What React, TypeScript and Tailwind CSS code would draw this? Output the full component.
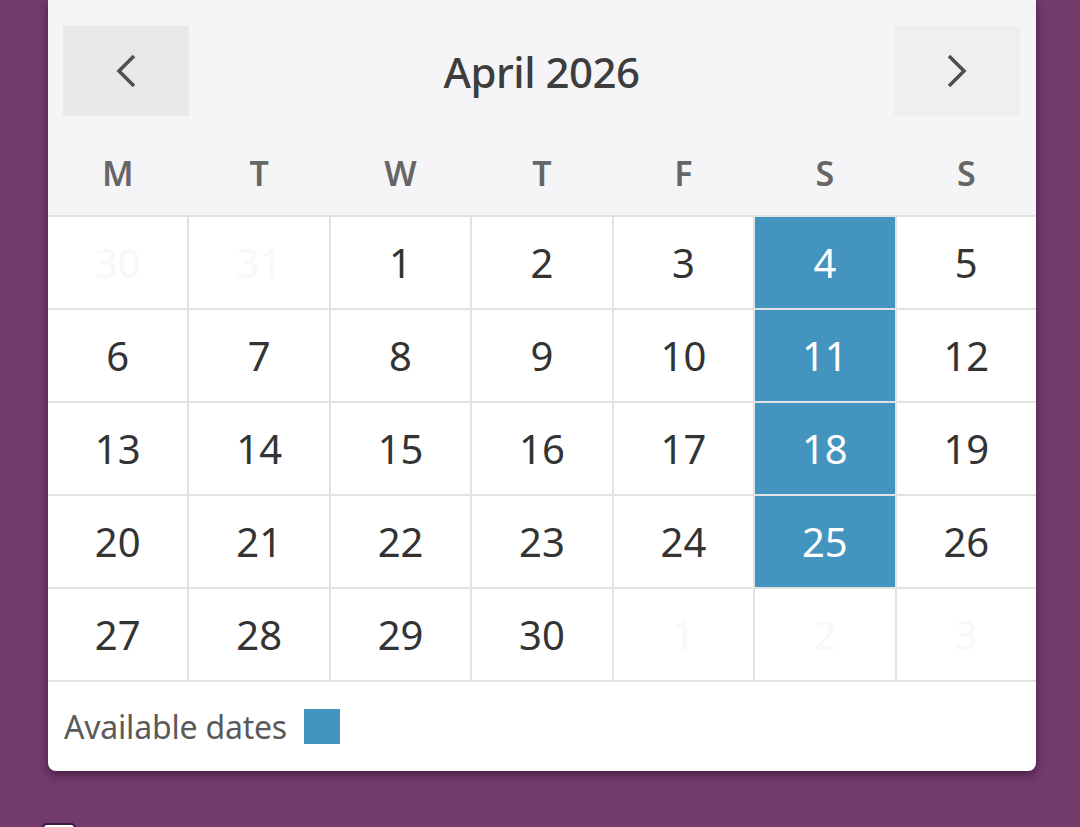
import React from "react";

type Cell = { day: number; muted?: boolean; available?: boolean };

const weekdays = ["M", "T", "W", "T", "F", "S", "S"];

// April 2026 starts on a Wednesday
const buildCells = (): Cell[] => {
  const cells: Cell[] = [{ day: 30, muted: true }, { day: 31, muted: true }];
  for (let d = 1; d <= 30; d++) {
    cells.push({ day: d, available: [4, 11, 18, 25].includes(d) });
  }
  for (let d = 1; d <= 3; d++) cells.push({ day: d, muted: true });
  return cells;
};

const Chevron = ({ dir }: { dir: "left" | "right" }) => (
  <svg width="22" height="34" viewBox="0 0 22 34" fill="none">
    <path
      d={dir === "left" ? "M19 2 L4 17 L19 32" : "M3 2 L18 17 L3 32"}
      stroke="#505050"
      strokeWidth="3.6"
      strokeLinecap="butt"
    />
  </svg>
);

export default function App() {
  const cells = buildCells();

  return (
    <div
      className="h-[827px] w-[1080px] overflow-hidden bg-[#713b6c]"
      style={{ fontFamily: "'Noto Sans', 'Open Sans', sans-serif" }}
    >
      <div className="mx-[48px] w-[988px] overflow-hidden rounded-b-[8px] bg-white shadow-[0_4px_8px_rgba(40,10,40,0.55)]">
        {/* Header */}
        <div className="bg-[#f5f5f7] pt-[26px] pb-[15px]">
          <div className="flex items-center justify-between pl-[15px] pr-[16px]">
            <button className="flex h-[90px] w-[126px] items-center justify-center bg-[#e8e8e8]">
              <Chevron dir="left" />
            </button>
            <div className="text-[42px] font-medium tracking-[-0.5px] text-[#3d3d3d]">
              April 2026
            </div>
            <button className="flex h-[90px] w-[126px] items-center justify-center bg-[#efefef]">
              <Chevron dir="right" />
            </button>
          </div>
          <div className="mt-[30px] grid h-[54px] grid-cols-7 gap-[2px]">
            {weekdays.map((w, i) => (
              <div
                key={i}
                className="flex items-center justify-center text-[34px] font-semibold text-[#666]"
              >
                {w}
              </div>
            ))}
          </div>
        </div>

        {/* Days */}
        <div className="grid grid-cols-7 gap-[2px] border-y-2 border-[#e2e2e2] bg-[#e2e2e2]">
          {cells.map((c, i) => (
            <div
              key={i}
              className={
                c.available
                  ? "flex h-[91px] items-center justify-center bg-[#4394be] text-[40px] text-white"
                  : c.muted
                  ? "flex h-[91px] items-center justify-center bg-white text-[40px] text-[#f8f8f8]"
                  : "flex h-[91px] items-center justify-center bg-white text-[40px] text-[#333]"
              }
            >
              {c.day}
            </div>
          ))}
        </div>

        {/* Legend */}
        <div className="flex h-[89px] items-center gap-[17px] pl-[16px]">
          <span className="text-[32px] tracking-[-0.2px] text-[#5a5a5a]">Available dates</span>
          <span className="h-[35px] w-[36px] bg-[#4394be]" />
        </div>
      </div>

      {/* Checkbox row, below the fold */}
      <div className="mt-[52px] pl-[42px]">
        <span className="block h-[32px] w-[34px] rounded-[5px] border-2 border-[#3a1a38] bg-white" />
      </div>
    </div>
  );
}
